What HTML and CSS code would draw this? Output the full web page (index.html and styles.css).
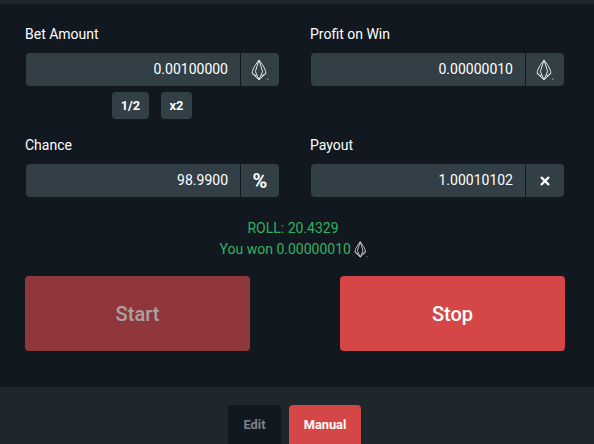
FILE: index.html
```html
<!DOCTYPE html>
<html lang="en">
<head>
    <meta charset="UTF-8">
    <meta name="viewport" content="width=device-width, initial-scale=1.0">
    <title>Dice</title>
    <link rel="stylesheet" href="styles.css">
</head>
<body>
    <svg class="defs" width="0" height="0">
        <symbol id="eos" viewBox="0 0 18 22">
            <path d="M8 1 C10.5 4.5 14.8 9.5 14.8 14.5 L8 20.8 L1.2 14.5 C1.2 9.5 5.5 4.5 8 1 Z M8 1 L4.4 12.5 L8 20.8 L11.6 12.5 Z M1.2 14.5 L5.6 17 M14.8 14.5 L10.4 17" fill="none" stroke="currentColor" stroke-width="1" stroke-linejoin="round"/>
            <rect x="16" y="19.5" width="1.4" height="1.4" fill="currentColor" opacity="0.5"/>
        </symbol>
    </svg>

    <div class="topbar"></div>

    <div class="panel">
        <div class="fields">
            <div class="field">
                <label>Bet Amount</label>
                <div class="input-group">
                    <div class="value">0.00100000</div>
                    <div class="addon"><svg class="eos"><use href="#eos"/></svg></div>
                </div>
                <div class="mini-buttons">
                    <button class="mini half">1/2</button>
                    <button class="mini">x2</button>
                </div>
            </div>
            <div class="field">
                <label>Profit on Win</label>
                <div class="input-group">
                    <div class="value">0.00000010</div>
                    <div class="addon"><svg class="eos"><use href="#eos"/></svg></div>
                </div>
            </div>
            <div class="field">
                <label>Chance</label>
                <div class="input-group">
                    <div class="value">98.9900</div>
                    <div class="addon symbol">%</div>
                </div>
            </div>
            <div class="field">
                <label>Payout</label>
                <div class="input-group">
                    <div class="value">1.00010102</div>
                    <div class="addon symbol">
                        <svg class="times" viewBox="0 0 10 10"><path d="M1 1 L9 9 M9 1 L1 9" stroke="currentColor" stroke-width="2.4" fill="none"/></svg>
                    </div>
                </div>
            </div>
        </div>

        <div class="result">
            <div>ROLL: 20.4329</div>
            <div class="won">You won 0.00000010 <svg class="eos small"><use href="#eos"/></svg></div>
        </div>

        <div class="actions">
            <button class="action disabled">Start</button>
            <button class="action">Stop</button>
        </div>
    </div>

    <div class="footer">
        <button class="tab edit">Edit</button>
        <button class="tab manual">Manual</button>
    </div>
</body>
</html>
```

FILE: styles.css
```css
* {
    margin: 0;
    padding: 0;
    box-sizing: border-box;
    font-family: Roboto, 'Liberation Sans', sans-serif;
}
html, body {
    height: 444px;
    overflow: hidden;
}
body {
    background: #11181f;
    color: #fff;
}
button {
    border: none;
    color: #fff;
    font-weight: 500;
}
.defs {
    position: absolute;
}
.topbar {
    height: 4px;
    background: #1d272c;
}
.panel {
    height: 383px;
    padding: 22px 29px 0 25px;
}
.fields {
    display: grid;
    grid-template-columns: 254px 254px;
    column-gap: 31px;
    row-gap: 18px;
}
.field label {
    display: block;
    height: 17px;
    line-height: 17px;
    font-size: 14px;
    margin-bottom: 10px;
}
.input-group {
    display: flex;
    height: 33px;
    margin-left: 1px;
    width: 253px;
}
.value {
    flex: 1;
    background: #323f46;
    border-radius: 4px 0 0 4px;
    text-align: right;
    font-size: 14px;
    line-height: 33px;
    padding-right: 12px;
}
.addon {
    width: 38px;
    margin-left: 1px;
    background: #323f46;
    border-radius: 0 4px 4px 0;
    display: flex;
    align-items: center;
    justify-content: center;
    font-size: 20px;
    font-weight: 700;
}
.eos {
    width: 18px;
    height: 22px;
    color: #e4e8ea;
}
.eos.small {
    width: 14px;
    height: 17px;
    vertical-align: -4px;
}
.times {
    width: 10px;
    height: 10px;
}
.mini-buttons {
    display: flex;
    justify-content: center;
    gap: 12px;
    margin-top: 6px;
    height: 27px;
}
.mini {
    height: 27px;
    width: 31px;
    background: #323f46;
    border-radius: 4px;
    font-size: 12.8px;
    font-weight: 700;
}
.mini.half {
    width: 37px;
}
.result {
    margin-top: 21px;
    padding-right: 4px;
    text-align: center;
    color: #2fb35f;
    font-size: 14px;
    line-height: 21px;
}
.won {
    margin-left: 2px;
}
.actions {
    display: flex;
    justify-content: space-between;
    margin-top: 16px;
    width: 540px;
}
.action {
    width: 225px;
    height: 75px;
    background: #d54647;
    border-radius: 4px;
    font-size: 20px;
}
.action.disabled {
    background: #90373b;
    color: #aaa2a3;
}
.footer {
    height: 57px;
    background: #1d272c;
    display: flex;
    justify-content: center;
    gap: 8px;
    padding: 18px 5px 0 0;
}
.tab {
    height: 39px;
    border-radius: 4px 4px 0 0;
    font-size: 12.8px;
    font-weight: 700;
}
.tab.edit {
    width: 53px;
    background: #11181f;
    color: #7d8286;
}
.tab.manual {
    width: 72px;
    background: #d54647;
}
```
